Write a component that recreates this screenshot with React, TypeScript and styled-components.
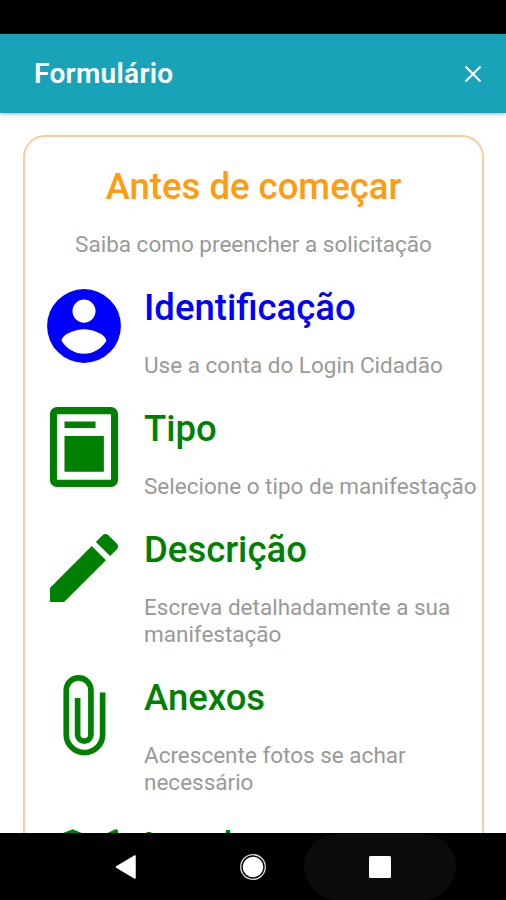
import React from "react";
import styled, { createGlobalStyle } from "styled-components";

const GlobalStyle = createGlobalStyle`
  * { box-sizing: border-box; }
  body { margin: 0; background: #000; font-family: Roboto, sans-serif; }
`;

const Screen = styled.div`
  width: 506px;
  height: 900px;
  display: flex;
  flex-direction: column;
  background: #fff;
  overflow: hidden;
`;

const StatusBar = styled.div`
  flex: 0 0 34px;
  background: #000;
`;

const Header = styled.header`
  flex: 0 0 79px;
  display: flex;
  align-items: center;
  justify-content: space-between;
  padding: 0 24px 0 34px;
  background: #19a3b9;
  color: #fff;
  box-shadow: 0 1px 4px rgba(60, 40, 40, 0.4);
  z-index: 1;
`;

const HeaderTitle = styled.h1`
  margin: 0;
  font-size: 28px;
  line-height: 36px;
  font-weight: 600;
  letter-spacing: 0.3px;
`;

const CloseButton = styled.button`
  display: flex;
  padding: 0;
  border: 0;
  background: none;
  color: inherit;
`;

const Content = styled.main`
  flex: 1;
  min-height: 0;
  padding: 22px 22px 0 23px;
  overflow: hidden;
`;

const Card = styled.section`
  height: 900px;
  padding: 28px 0 0 18px;
  border: 2px solid #fbcb9f;
  border-radius: 22px;
`;

const Intro = styled.div`
  height: 120px;
  padding-right: 18px;
  text-align: center;
`;

const Title = styled.h2<{ $color: string }>`
  margin: 0;
  padding-top: 1px;
  height: 67px;
  font-size: 36.5px;
  line-height: 44px;
  font-weight: 500;
  color: ${(p) => p.$color};
`;

const IntroTitle = styled(Title)`
  padding-top: 0;
`;

const Text = styled.p`
  margin: 0;
  font-size: 22.5px;
  line-height: 27px;
  color: #999;
`;

const IntroText = styled(Text)`
  margin-top: -1px;
`;

const Step = styled.div`
  display: flex;
  align-items: flex-start;
  gap: 19px;
  margin-bottom: 27px;
`;

const StepIcon = styled.svg<{ $color: string }>`
  flex: 0 0 82px;
  width: 82px;
  height: 82px;
  fill: ${(p) => p.$color};
  stroke: none;
`;

const StepBody = styled.div`
  flex: 1;
  min-width: 0;
`;

const NavBar = styled.nav`
  flex: 0 0 67px;
  display: flex;
  align-items: center;
  justify-content: center;
  background: #000;
`;

const NavButton = styled.div`
  width: 127px;
  height: 66px;
  display: flex;
  align-items: center;
  justify-content: center;
`;

const PressedButton = styled(NavButton)`
  width: 152px;
  margin: 0 -12.5px;
  border-radius: 33px;
  background: #0b0b0b;
`;

const steps = [
  {
    title: "Identificação",
    text: "Use a conta do Login Cidadão",
    color: "#0000ff",
    icon: (
      <path
        fillRule="evenodd"
        d="M256 48a208 208 0 1 0 0 416 208 208 0 1 0 0-416zM256 107a65 65 0 1 1 0 130 65 65 0 1 1 0-130zM256 413c-52 0-98-28-126-72 1-42 84-67 126-67s125 25 126 67c-28 44-74 72-126 72z"
      />
    ),
  },
  {
    title: "Tipo",
    text: "Selecione o tipo de manifestação",
    color: "#008000",
    icon: (
      <path
        fillRule="evenodd"
        d="M104 30H408a40 40 0 0 1 40 40V442a40 40 0 0 1-40 40H104a40 40 0 0 1-40-40V70a40 40 0 0 1 40-40zM104 71V440H408V71zM146 113H321V149H146zM146 194H368V396H146z"
      />
    ),
  },
  {
    title: "Descrição",
    text: "Escreva detalhadamente a sua manifestação",
    color: "#008000",
    icon: (
      <path d="M64 368v80h80l235.7-235.8-80-80L64 368zm377.8-217.8c8.3-8.3 8.3-21.9 0-30.2l-49.9-49.9c-8.3-8.3-21.9-8.3-30.2 0L323 108.9l80 80 38.8-38.7z" />
    ),
  },
  {
    title: "Anexos",
    text: "Acrescente fotos se achar necessário",
    color: "#008000",
    icon: (
      <path
        fill="none"
        stroke="#008000"
        strokeWidth="32"
        d="M361 124V360a102.5 102.5 0 0 1-205 0V111a69.5 69.5 0 0 1 139 0V360a37.500 37.500 0 0 1-75 0V155"
      />
    ),
  },
  {
    title: "Local",
    text: "",
    color: "#008000",
    icon: (
      <path
        fillRule="evenodd"
        d="M437 60l-4 .7L320 112 192 60 72 107c-4.600 1.500-8 5.600-8 10.700V433c0 6 5 11 11 11l4-.7L192 396l128 48 120-40c5-2 8-6 8-11V71c0-6-5-11-11-11zM320 401l-128-45V103l128 45z"
      />
    ),
  },
];

export default function App() {
  return (
    <>
      <GlobalStyle />
      <Screen>
        <StatusBar />
        <Header>
          <HeaderTitle>Formulário</HeaderTitle>
          <CloseButton aria-label="Fechar">
            <svg width="18" height="18" viewBox="0 0 18 18">
              <path d="M1.500 1.500l15 15M16.500 1.500l-15 15" stroke="#fff" strokeWidth="2.100" />
            </svg>
          </CloseButton>
        </Header>
        <Content>
          <Card>
            <Intro>
              <IntroTitle $color="#ff9c10">Antes de começar</IntroTitle>
              <IntroText>Saiba como preencher a solicitação</IntroText>
            </Intro>
            {steps.map((s) => (
              <Step key={s.title}>
                <StepIcon $color={s.color} viewBox="25 25 462 462">
                  {s.icon}
                </StepIcon>
                <StepBody>
                  <Title $color={s.color}>{s.title}</Title>
                  {s.text && <Text>{s.text}</Text>}
                </StepBody>
              </Step>
            ))}
          </Card>
        </Content>
        <NavBar>
          <NavButton>
            <svg width="22" height="26" viewBox="0 0 22 26">
              <path d="M1.500 13L20 2V24z" fill="#fff" stroke="#fff" strokeWidth="1.500" strokeLinejoin="round" />
            </svg>
          </NavButton>
          <NavButton>
            <svg width="28" height="28" viewBox="0 0 28 28">
              <circle cx="14" cy="14" r="12.300" fill="none" stroke="#ddd" strokeWidth="1.300" />
              <circle cx="14" cy="14" r="10.300" fill="#fff" />
            </svg>
          </NavButton>
          <PressedButton>
            <svg width="22" height="22" viewBox="0 0 22 22">
              <rect width="22" height="22" rx="1.500" fill="#fff" />
            </svg>
          </PressedButton>
        </NavBar>
      </Screen>
    </>
  );
}
